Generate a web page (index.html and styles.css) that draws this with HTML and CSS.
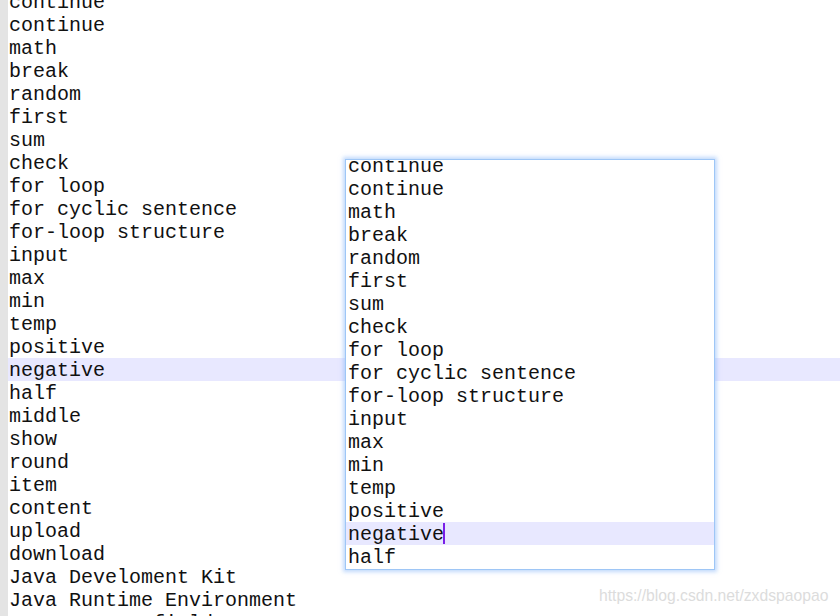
FILE: index.html
```html
<!DOCTYPE html>
<html>
<head>
<meta charset="utf-8">
<link rel="stylesheet" href="styles.css">
</head>
<body>
<div class="editor">
  <div class="gutter"></div>
  <div class="text">
    <div class="lines">
      <div class="line">continue</div>
      <div class="line">continue</div>
      <div class="line">math</div>
      <div class="line">break</div>
      <div class="line">random</div>
      <div class="line">first</div>
      <div class="line">sum</div>
      <div class="line">check</div>
      <div class="line">for loop</div>
      <div class="line">for cyclic sentence</div>
      <div class="line">for-loop structure</div>
      <div class="line">input</div>
      <div class="line">max</div>
      <div class="line">min</div>
      <div class="line">temp</div>
      <div class="line">positive</div>
      <div class="line current">negative</div>
      <div class="line">half</div>
      <div class="line">middle</div>
      <div class="line">show</div>
      <div class="line">round</div>
      <div class="line">item</div>
      <div class="line">content</div>
      <div class="line">upload</div>
      <div class="line">download</div>
      <div class="line">Java Develoment Kit</div>
      <div class="line">Java Runtime Environment</div>
      <div class="line">screen text field</div>
    </div>
  </div>
</div>

<div class="popup">
  <div class="popup-lines">
    <div class="line">continue</div>
    <div class="line">continue</div>
    <div class="line">math</div>
    <div class="line">break</div>
    <div class="line">random</div>
    <div class="line">first</div>
    <div class="line">sum</div>
    <div class="line">check</div>
    <div class="line">for loop</div>
    <div class="line">for cyclic sentence</div>
    <div class="line">for-loop structure</div>
    <div class="line">input</div>
    <div class="line">max</div>
    <div class="line">min</div>
    <div class="line">temp</div>
    <div class="line">positive</div>
    <div class="line current">negative<span class="caret"></span></div>
    <div class="line">half</div>
  </div>
</div>

<div class="watermark">https://blog.csdn.net/zxdspaopao</div>
</body>
</html>
```

FILE: styles.css
```css
html, body {
  margin: 0;
  padding: 0;
  background: #ffffff;
  width: 840px;
  height: 616px;
  overflow: hidden;
}

.editor {
  display: flex;
  height: 616px;
  overflow: hidden;
}

.gutter {
  width: 8px;
  flex: none;
  background: #e4e4e4;
}

.text {
  flex: 1;
  overflow: hidden;
}

.lines {
  margin-top: -10px;
}

.line {
  font-family: "Courier New", "Nimbus Mono PS", "FreeMono", "Courier 10 Pitch", "Liberation Mono", monospace;
  font-size: 20px;
  line-height: 23px;
  height: 23px;
  box-sizing: border-box;
  padding-top: 1px;
  color: #111111;
  white-space: pre;
  padding-left: 1px;
}

.line.current {
  background: #e8e8ff;
}

.popup {
  position: absolute;
  left: 345px;
  top: 159px;
  width: 368px;
  height: 409px;
  background: #ffffff;
  border: 1px solid #9ec6f6;
  box-shadow: 0 0 4px 2px rgba(140, 185, 250, 0.55);
  overflow: hidden;
}

.popup-lines {
  margin-top: -6px;
}

.popup-lines .line {
  padding-left: 2px;
}

.caret {
  display: inline-block;
  width: 2px;
  height: 21px;
  margin-left: -1px;
  vertical-align: -4px;
  background: #7a1fe8;
}

.watermark {
  position: absolute;
  left: 599px;
  top: 586px;
  font-family: "Liberation Sans", Arial, sans-serif;
  font-size: 15.7px;
  line-height: 20px;
  color: #dcdcdc;
  white-space: nowrap;
}
```
